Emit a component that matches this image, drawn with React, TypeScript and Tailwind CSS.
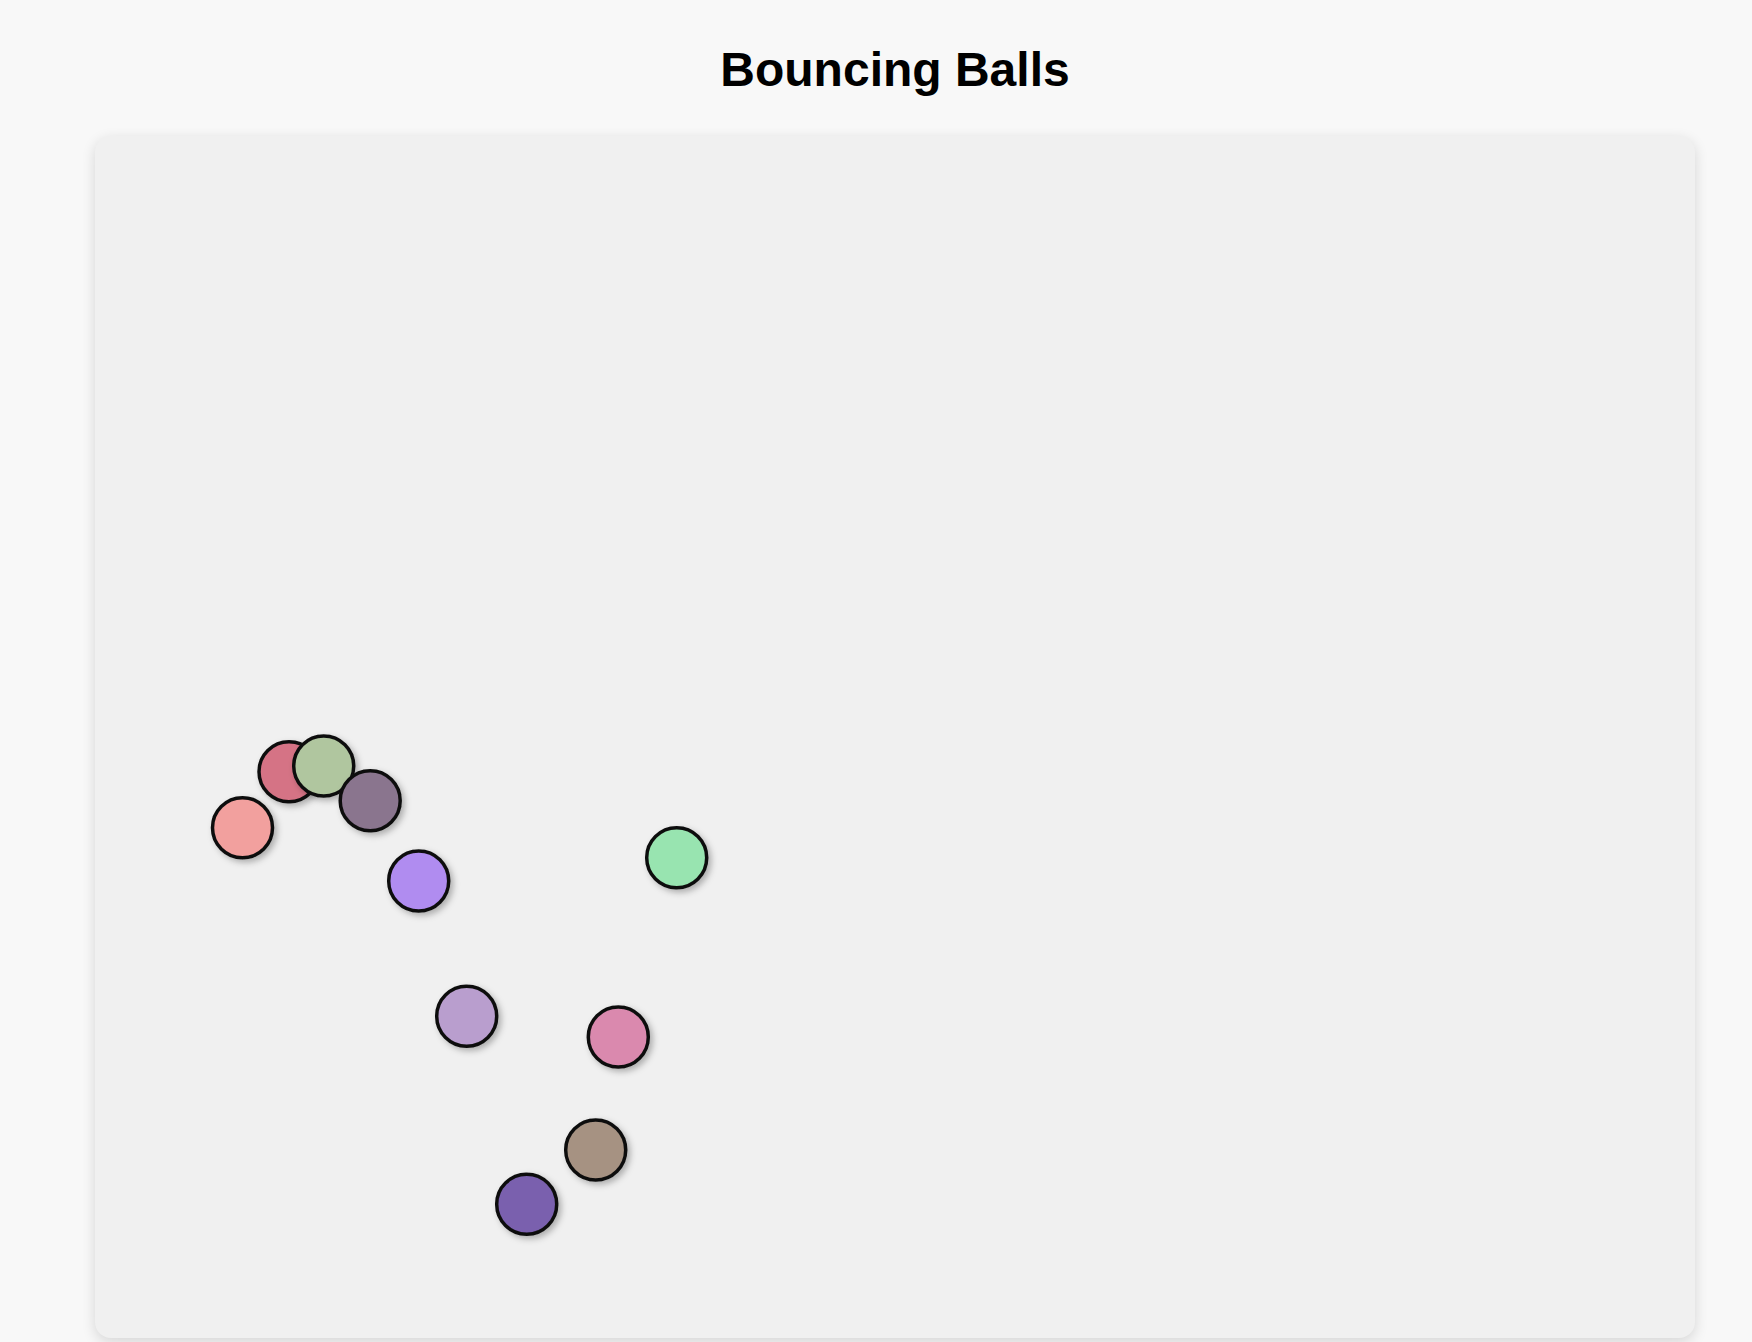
type Ball = {
  x: number;
  y: number;
  color: string;
};

// snapshot of the simulation, positions in canvas pixels
const BALLS: Ball[] = [
  { x: 147.5, y: 691.7, color: "#f2a09e" },
  { x: 194, y: 635.8, color: "#d57385" },
  { x: 228.7, y: 630, color: "#b0c69f" },
  { x: 275.2, y: 664.8, color: "#8a748e" },
  { x: 323.7, y: 745, color: "#b08cf0" },
  { x: 581.7, y: 721.7, color: "#98e4b0" },
  { x: 371.7, y: 880.3, color: "#b99ece" },
  { x: 523.3, y: 901, color: "#da89ae" },
  { x: 500.7, y: 1014, color: "#a69282" },
  { x: 431.7, y: 1068.3, color: "#7a61ae" },
];

const RADIUS = 30;

function BallCanvas() {
  return (
    <svg width={1600} height={1202} viewBox="0 0 1600 1202" className="block">
      <defs>
        <filter id="ball-shadow" x="-50%" y="-50%" width="200%" height="200%">
          <feDropShadow dx="3" dy="3" stdDeviation="3" floodColor="#000" floodOpacity="0.28" />
        </filter>
      </defs>
      {BALLS.map((b, i) => (
        <circle
          key={i}
          cx={b.x}
          cy={b.y}
          r={RADIUS}
          fill={b.color}
          stroke="#111"
          strokeWidth={3.5}
          filter="url(#ball-shadow)"
        />
      ))}
    </svg>
  );
}

export default function App() {
  return (
    <div className="min-h-screen bg-[#f8f8f8] pl-[95px] font-['Liberation_Sans',Arial,sans-serif]">
      <div className="w-[1600px]">
        <h1 className="pt-[42px] text-center text-[48px] font-bold leading-[56px] text-black">
          Bouncing Balls
        </h1>
        <div className="mt-[38px] h-[1202px] w-[1600px] overflow-hidden rounded-2xl bg-[#f0f0f0] shadow-[0_4px_14px_rgba(0,0,0,0.14)]">
          <BallCanvas />
        </div>
      </div>
    </div>
  );
}
